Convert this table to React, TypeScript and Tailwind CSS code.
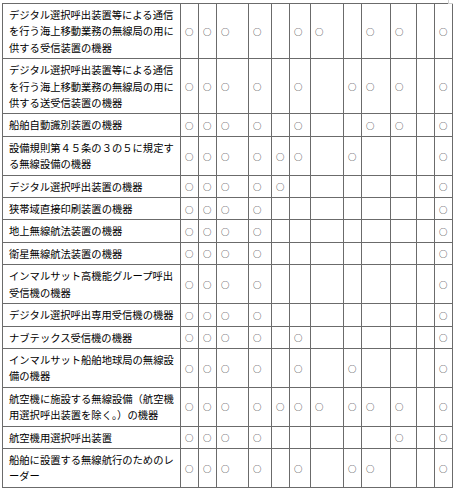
import React from 'react'

const COLS = 'grid-cols-[178px_18px_18px_32px_23px_18px_21px_33px_18px_29px_26px_18px_18px]'

type Row = { lines: string[]; marks: number[] }

const rows: Row[] = [
  { lines: ['デジタル選択呼出装置等による通信', 'を行う海上移動業務の無線局の用に', '供する受信装置の機器'], marks: [1, 2, 3, 4, 6, 7, 9, 10, 12] },
  { lines: ['デジタル選択呼出装置等による通信', 'を行う海上移動業務の無線局の用に', '供する送受信装置の機器'], marks: [1, 2, 3, 4, 6, 8, 9, 10, 12] },
  { lines: ['船舶自動識別装置の機器'], marks: [1, 2, 3, 4, 6, 9, 10, 12] },
  { lines: ['設備規則第４５条の３の５に規定す', 'る無線設備の機器'], marks: [1, 2, 3, 4, 5, 6, 8, 12] },
  { lines: ['デジタル選択呼出装置の機器'], marks: [1, 2, 3, 4, 5, 12] },
  { lines: ['狭帯域直接印刷装置の機器'], marks: [1, 2, 3, 4, 12] },
  { lines: ['地上無線航法装置の機器'], marks: [1, 2, 3, 4, 12] },
  { lines: ['衛星無線航法装置の機器'], marks: [1, 2, 3, 4, 12] },
  { lines: ['インマルサット高機能グループ呼出', '受信機の機器'], marks: [1, 2, 3, 4, 12] },
  { lines: ['デジタル選択呼出専用受信機の機器'], marks: [1, 2, 3, 4, 12] },
  { lines: ['ナブテックス受信機の機器'], marks: [1, 2, 3, 4, 6, 12] },
  { lines: ['インマルサット船舶地球局の無線設', '備の機器'], marks: [1, 2, 3, 4, 6, 8, 12] },
  { lines: ['航空機に施設する無線設備（航空機', '用選択呼出装置を除く。）の機器'], marks: [1, 2, 3, 4, 5, 6, 7, 8, 9, 10, 12] },
  { lines: ['航空機用選択呼出装置'], marks: [1, 2, 3, 4, 10, 12] },
  { lines: ['船舶に設置する無線航行のためのレ', 'ーダー'], marks: [1, 2, 3, 4, 6, 8, 9, 12] },
]

const dataCols = [1, 2, 3, 4, 5, 6, 7, 8, 9, 10, 11, 12]

export default function App() {
  return (
    <div className="relative h-[488px] w-[453px] overflow-hidden bg-white text-black font-['Noto_Sans_CJK_JP','Noto_Sans',sans-serif] text-[10.3px] leading-[16.4px]">
      <div className="absolute left-[448px] top-0 h-[4px] w-[6px] border-b border-l border-[#cfcfcf]" />

      <div className={`ml-[2px] mt-[3px] grid w-[451px] ${COLS} border-l border-t border-[#6b6b6b]`}>
        {rows.map((row, i) => (
          <React.Fragment key={i}>
            <div className="flex items-center border-b border-r border-[#6b6b6b] pb-[2px] pl-[6px] pr-[2px] pt-[3px]">
              <span>
                {row.lines.map((line, j) => (
                  <React.Fragment key={j}>
                    {j > 0 && <br />}
                    {line}
                  </React.Fragment>
                ))}
              </span>
            </div>
            {dataCols.map(c => (
              <div key={c} className="flex items-center border-b border-r border-[#6b6b6b] pl-[4px] text-[8.4px]">
                {row.marks.includes(c) ? '○' : ''}
              </div>
            ))}
          </React.Fragment>
        ))}
      </div>
    </div>
  )
}
